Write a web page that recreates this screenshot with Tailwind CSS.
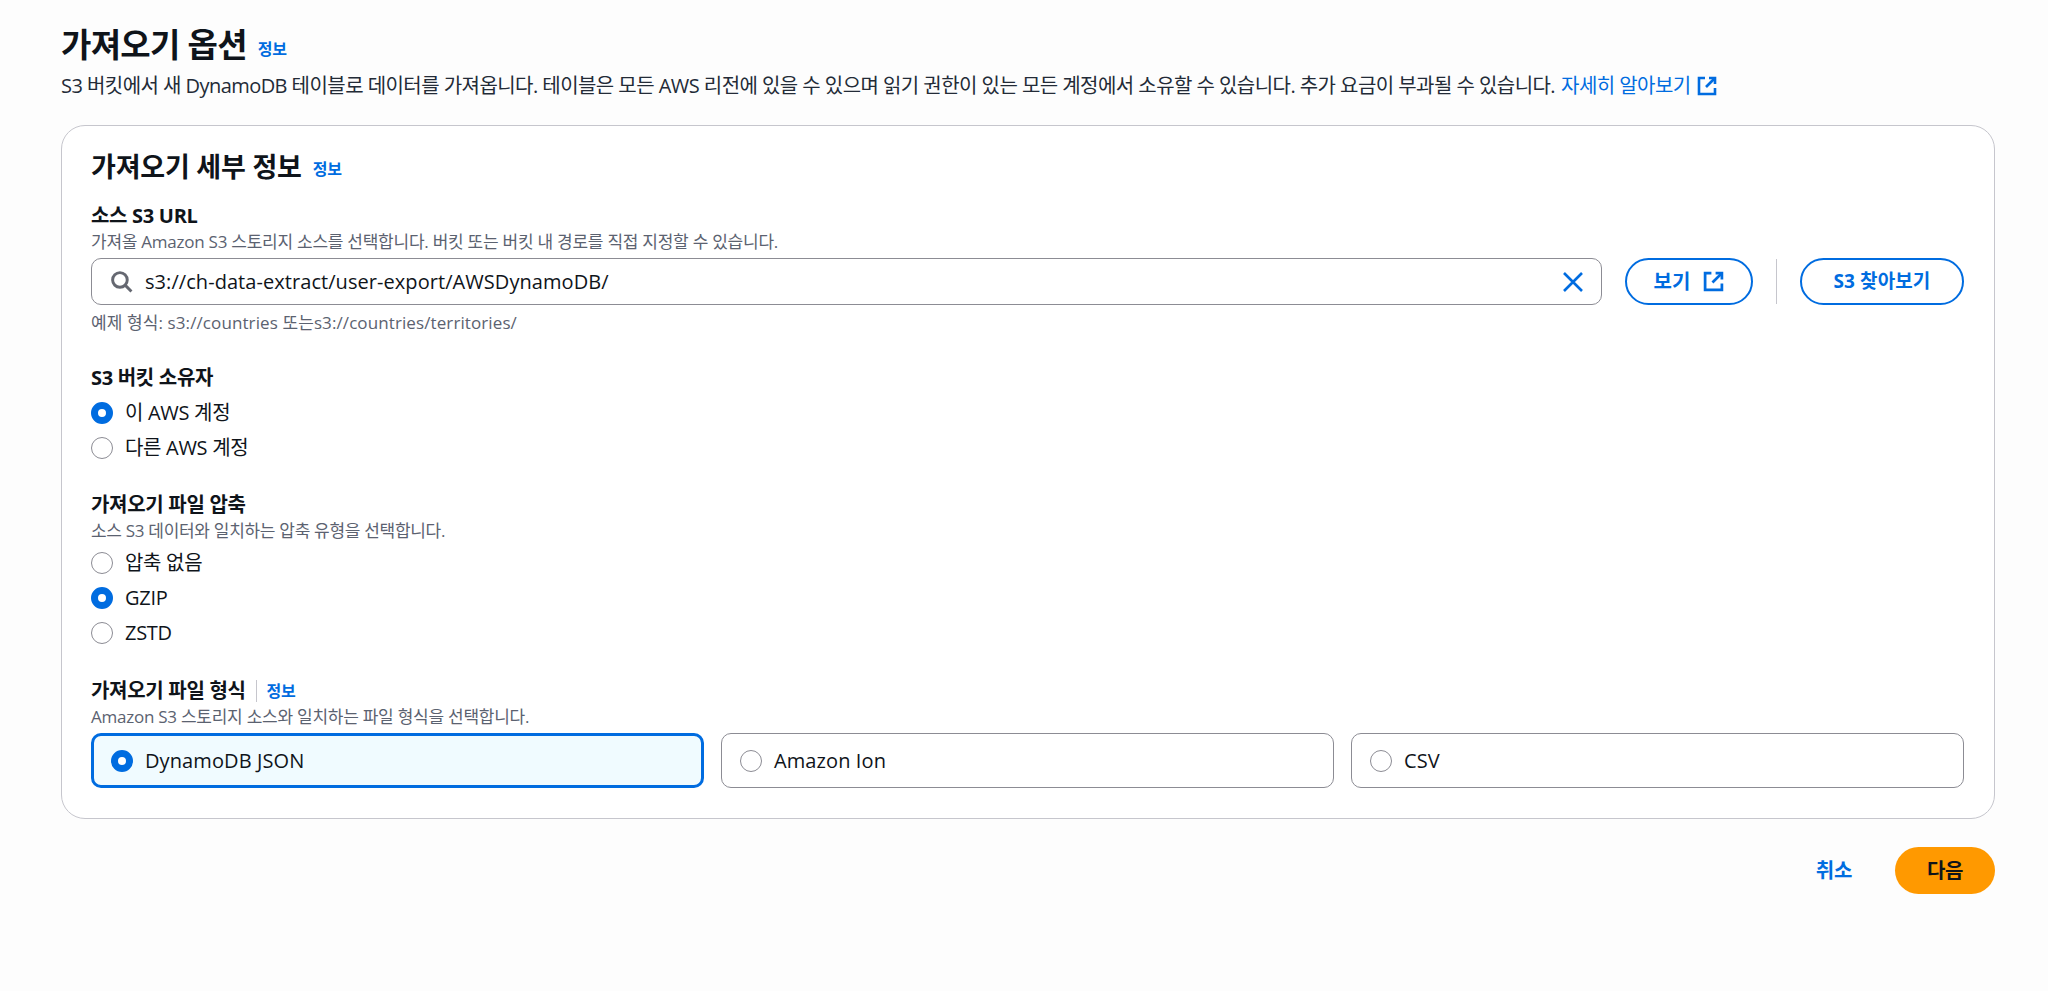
<!DOCTYPE html>
<html lang="ko">
<head>
  <meta charset="UTF-8" />
  <title>가져오기 옵션</title>
  <script src="https://cdn.jsdelivr.net/npm/@tailwindcss/browser@4"></script>
</head>
<body class="bg-[#fdfdfd] h-[991px] overflow-hidden font-['Open_Sans','Noto_Sans_CJK_KR',sans-serif] text-[#0f141a]">
  <div class="pl-[61px] pr-[53px] pt-[26px]">
    <!-- Page header -->
    <div class="flex items-center h-[38px] gap-[11px]">
      <h1 class="text-[33px] leading-[38px] font-bold tracking-[-0.7px]">가져오기 옵션</h1>
      <a class="text-[16px] font-bold text-[#006ce0] mt-[8px] tracking-[-0.3px]">정보</a>
    </div>
    <p class="mt-[10px] h-[24px] text-[20px] leading-[24px] text-[#232b37] flex items-center whitespace-nowrap tracking-[-0.55px]">
      S3 버킷에서 새 DynamoDB 테이블로 데이터를 가져옵니다. 테이블은 모든 AWS 리전에 있을 수 있으며 읽기 권한이 있는 모든 계정에서 소유할 수 있습니다. 추가 요금이 부과될 수 있습니다.
      <a class="ml-[6px] text-[#006ce0] flex items-center gap-[6px]">자세히 알아보기
        <svg class="w-[20px] h-[20px]" viewBox="0 0 20 20" fill="none" stroke="#006ce0" stroke-width="2.6"><path d="M8 2H2v16h16v-6"/><path d="M12 2h6v6"/><path d="M18 2 9 11"/></svg>
      </a>
    </p>

    <!-- Card -->
    <div class="mt-[27px] h-[694px] bg-white border border-[#c6c6cd] rounded-[24px] pl-[29px] pr-[30px] pt-[25px]">
      <div class="flex items-center h-[32px] gap-[11px]">
        <h2 class="text-[27px] leading-[32px] font-bold tracking-[-0.2px]">가져오기 세부 정보</h2>
        <a class="text-[16px] font-bold text-[#006ce0] mt-[4px] tracking-[-0.3px]">정보</a>
      </div>

      <label class="block mt-[21px] text-[20px] leading-[24px] font-bold tracking-[-0.3px]">소스 S3 URL</label>
      <p class="mt-[4px] text-[17px] leading-[20px] text-[#5b6270] tracking-[-0.25px]">가져올 Amazon S3 스토리지 소스를 선택합니다. 버킷 또는 버킷 내 경로를 직접 지정할 수 있습니다.</p>
      <div class="mt-[6px] flex items-center">
        <div class="w-[1511px] h-[47px] border border-[#8c8c94] rounded-[10px] flex items-center pl-[18px] pr-[18px]">
          <svg class="w-[23px] h-[23px] text-[#656871]" viewBox="0 0 22 22" fill="none" stroke="currentColor" stroke-width="2.8"><circle cx="9.5" cy="9.5" r="7"/><path d="m14.5 14.5 6 6"/></svg>
          <span class="ml-[12px] text-[20px] tracking-[0.06px]">s3://ch-data-extract/user-export/AWSDynamoDB/</span>
          <svg class="ml-auto w-[20px] h-[20px]" viewBox="0 0 20 20" fill="none" stroke="#006ce0" stroke-width="2.6"><path d="m1 1 18 18M19 1 1 19"/></svg>
        </div>
        <button class="ml-[23px] w-[128px] h-[47px] rounded-full border-[2.5px] border-[#006ce0] text-[#006ce0] text-[20px] font-bold flex items-center justify-center gap-[13px]">
          보기
          <svg class="w-[21px] h-[21px]" viewBox="0 0 20 20" fill="none" stroke="#006ce0" stroke-width="2.6"><path d="M8 2H2v16h16v-6"/><path d="M12 2h6v6"/><path d="M18 2 9 11"/></svg>
        </button>
        <div class="ml-[23px] w-px h-[45px] bg-[#c6c6cd]"></div>
        <button class="ml-[23px] w-[164px] h-[47px] rounded-full border-[2.5px] border-[#006ce0] text-[#006ce0] text-[19px] font-bold tracking-[0.1px]">S3 찾아보기</button>
      </div>
      <p class="mt-[8px] text-[17px] leading-[20px] text-[#5b6270] tracking-[0.1px]">예제 형식: s3://countries 또는s3://countries/territories/</p>

      <label class="block mt-[33px] text-[20px] leading-[24px] font-bold tracking-[-0.3px]">S3 버킷 소유자</label>
      <div class="mt-[5px] flex items-center h-[35px] gap-[12px]">
        <span class="w-[22px] h-[22px] rounded-full border-[7px] border-[#006ce0] bg-white"></span>
        <span class="text-[20px] tracking-[-0.3px]">이 AWS 계정</span>
      </div>
      <div class="flex items-center h-[35px] gap-[12px]">
        <span class="w-[22px] h-[22px] rounded-full border border-[#8c8c94] bg-white"></span>
        <span class="text-[20px] tracking-[-0.3px]">다른 AWS 계정</span>
      </div>

      <label class="block mt-[28px] text-[20px] leading-[24px] font-bold tracking-[-0.3px]">가져오기 파일 압축</label>
      <p class="mt-[4px] text-[17px] leading-[20px] text-[#5b6270] tracking-[-0.3px]">소스 S3 데이터와 일치하는 압축 유형을 선택합니다.</p>
      <div class="mt-[4px] flex items-center h-[35px] gap-[12px]">
        <span class="w-[22px] h-[22px] rounded-full border border-[#8c8c94] bg-white"></span>
        <span class="text-[20px] tracking-[-0.3px]">압축 없음</span>
      </div>
      <div class="flex items-center h-[35px] gap-[12px]">
        <span class="w-[22px] h-[22px] rounded-full border-[7px] border-[#006ce0] bg-white"></span>
        <span class="text-[20px] tracking-[-0.3px]">GZIP</span>
      </div>
      <div class="flex items-center h-[35px] gap-[12px]">
        <span class="w-[22px] h-[22px] rounded-full border border-[#8c8c94] bg-white"></span>
        <span class="text-[20px] tracking-[-0.3px]">ZSTD</span>
      </div>

      <div class="mt-[29px] flex items-center h-[24px]">
        <label class="text-[20px] leading-[24px] font-bold tracking-[-0.3px]">가져오기 파일 형식</label>
        <span class="ml-[10px] w-px h-[22px] bg-[#c6c6cd]"></span>
        <a class="ml-[10px] text-[16px] font-bold text-[#006ce0] tracking-[-0.3px]">정보</a>
      </div>
      <p class="mt-[4px] text-[17px] leading-[20px] text-[#5b6270] tracking-[-0.25px]">Amazon S3 스토리지 소스와 일치하는 파일 형식을 선택합니다.</p>
      <div class="mt-[6px] grid grid-cols-3 gap-[17px] w-[1873px]">
        <div class="h-[55px] rounded-[10px] border-[3px] border-[#006ce0] bg-[#f0fbff] flex items-center pl-[17px] gap-[12px]">
          <span class="w-[22px] h-[22px] rounded-full border-[7px] border-[#006ce0] bg-white"></span>
          <span class="text-[20px] tracking-[0.1px]">DynamoDB JSON</span>
        </div>
        <div class="h-[55px] rounded-[10px] border border-[#8c8c94] bg-white flex items-center pl-[18px] gap-[12px]">
          <span class="w-[22px] h-[22px] rounded-full border border-[#8c8c94] bg-white"></span>
          <span class="text-[20px] tracking-[0.1px]">Amazon Ion</span>
        </div>
        <div class="h-[55px] rounded-[10px] border border-[#8c8c94] bg-white flex items-center pl-[18px] gap-[12px]">
          <span class="w-[22px] h-[22px] rounded-full border border-[#8c8c94] bg-white"></span>
          <span class="text-[20px] tracking-[0.1px]">CSV</span>
        </div>
      </div>
    </div>

    <!-- Footer actions -->
    <div class="mt-[28px] flex items-center justify-end">
      <a class="text-[20px] font-bold text-[#006ce0] tracking-[-0.3px]">취소</a>
      <button class="ml-[43px] w-[100px] h-[47px] rounded-full bg-[#ff9900] text-[20px] font-bold tracking-[-0.3px]">다음</button>
    </div>
  </div>
</body>
</html>
